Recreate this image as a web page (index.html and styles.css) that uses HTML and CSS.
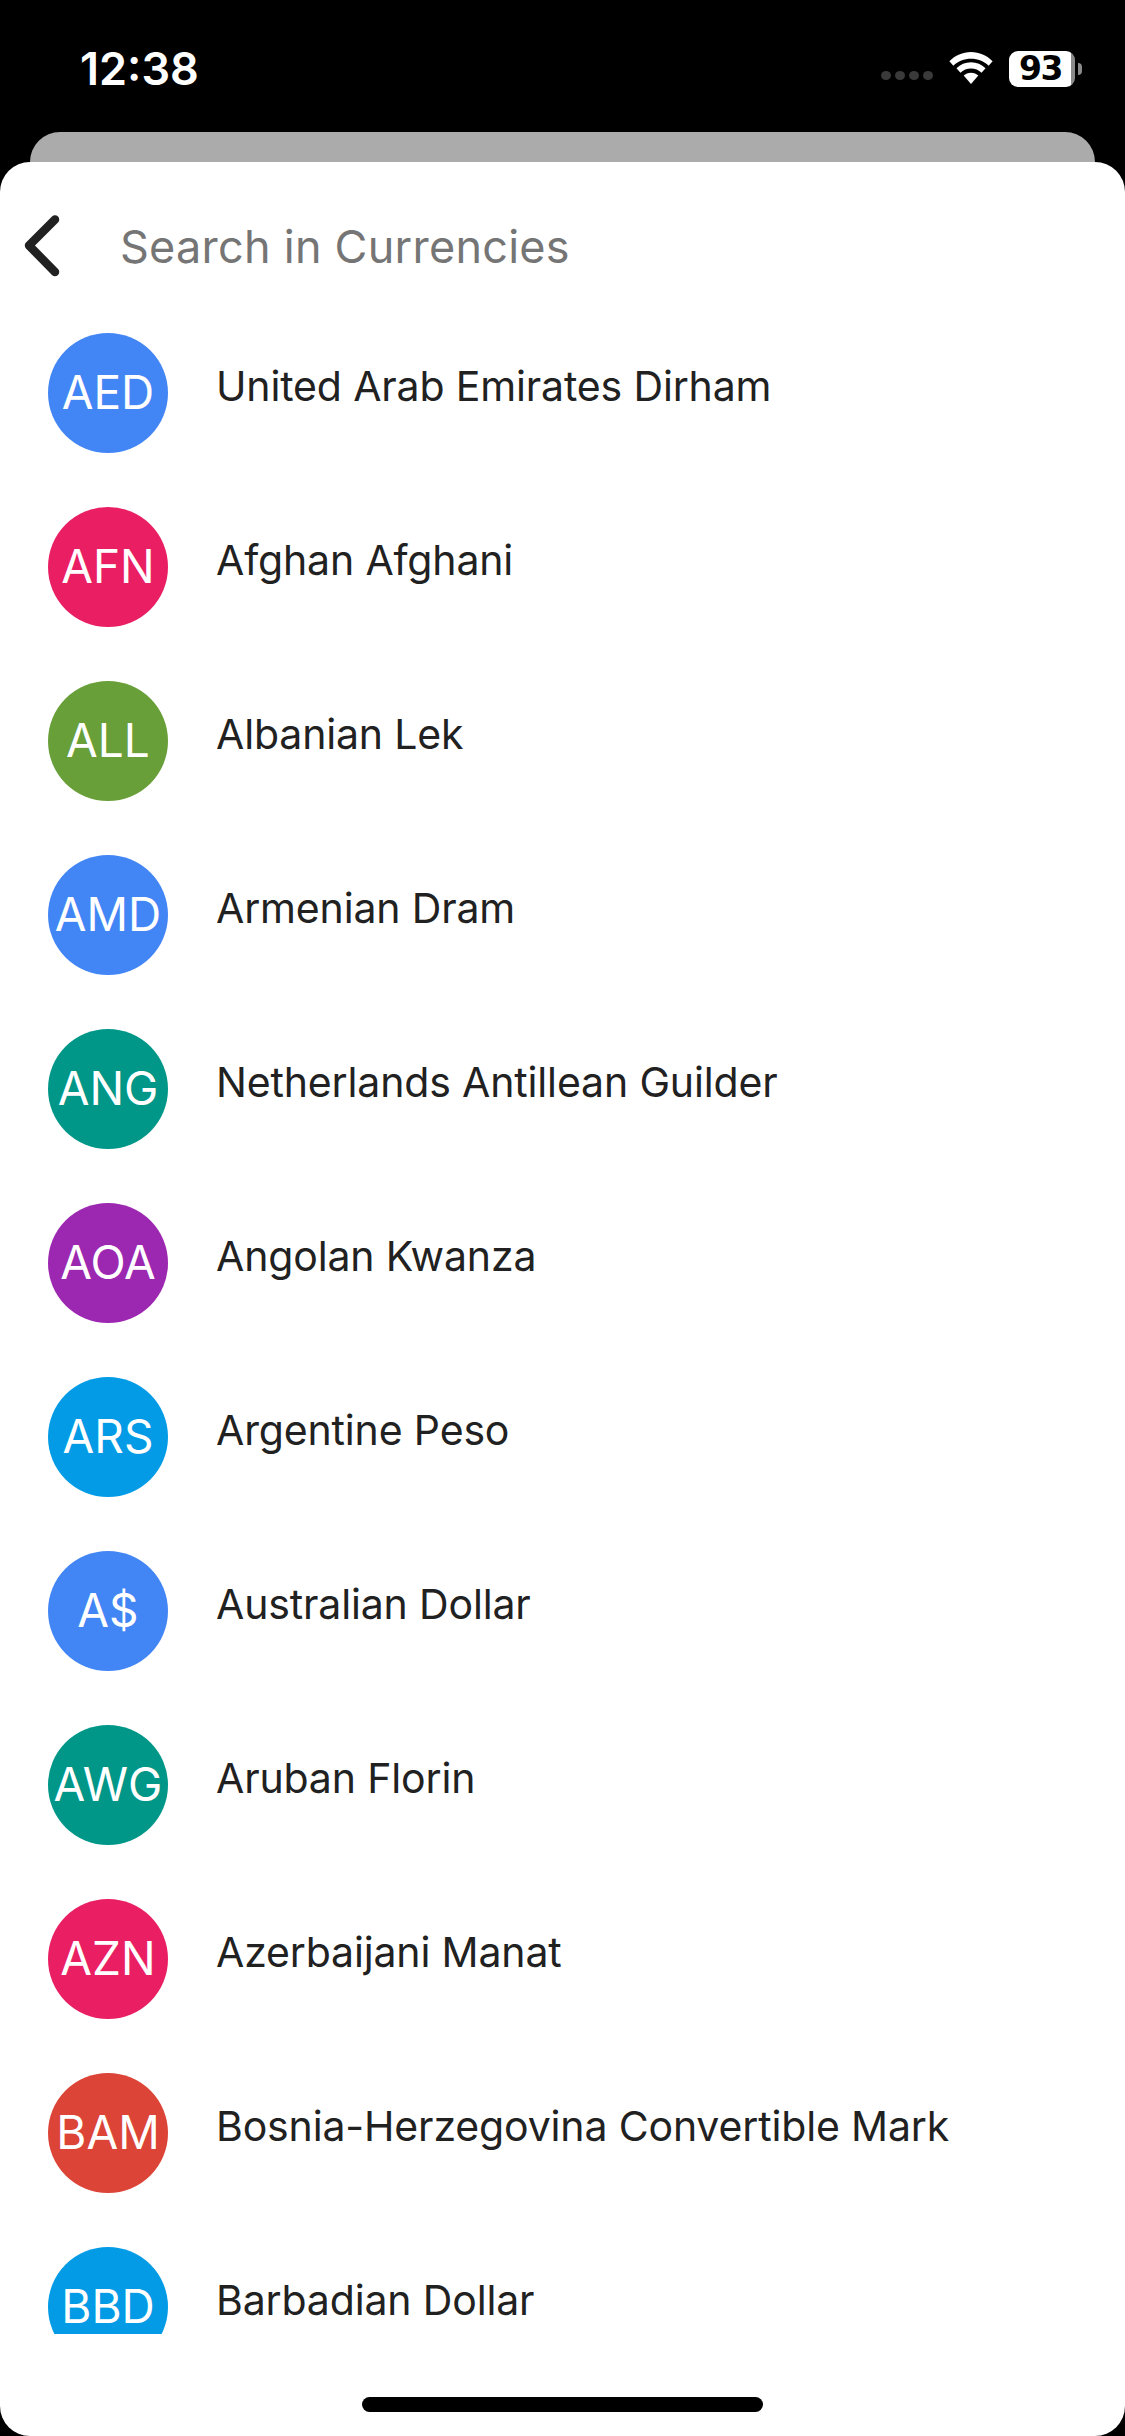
FILE: index.html
```html
<!DOCTYPE html>
<html lang="en">
<head>
<meta charset="utf-8">
<title>Currencies</title>
<link rel="stylesheet" href="styles.css">
</head>
<body>
<div class="phone">
  <header class="status">
    <span class="time">12:38</span>
    <div class="status-icons">
      <div class="signal"><i></i><i></i><i></i><i></i></div>
      <svg class="wifi" width="46" height="34" viewBox="1 0 44 33"><path d="M23 7.500c6.600 0 12.600 2.500 17.100 6.700l3.900-4.300C38.400 4.400 31 1 23 1S7.600 4.400 2 9.900l3.900 4.300C10.400 10 16.400 7.500 23 7.500z" fill="#fff"/><path d="M23 17c3.900 0 7.600 1.500 10.200 4l3.900-4.300C33.400 13.100 28.400 11 23 11s-10.400 2.100-14.100 5.700l3.900 4.300c2.600-2.500 6.300-4 10.200-4z" fill="#fff"/><path d="M23 21c-2.800 0-5.300 1.100-7.100 2.800L23 32l7.100-8.200C28.300 22.100 25.800 21 23 21z" fill="#fff"/></svg>
      <div class="battery"><div class="battery-body"><span>93</span></div><div class="battery-cap"></div></div>
    </div>
  </header>
  <div class="back-card"></div>
  <main class="sheet">
    <div class="search">
      <svg class="back" width="40" height="64" viewBox="0 0 40 64"><path d="M35 6.500 9 32.500 35 59" fill="none" stroke="#212121" stroke-width="8.500" stroke-linecap="round" stroke-linejoin="round"/></svg>
      <span class="placeholder">Search in Currencies</span>
    </div>
    <ul class="list">
      <li class="row"><span class="avatar c-blue">AED</span><span class="name">United Arab Emirates Dirham</span></li>
      <li class="row"><span class="avatar c-pink">AFN</span><span class="name">Afghan Afghani</span></li>
      <li class="row"><span class="avatar c-green">ALL</span><span class="name">Albanian Lek</span></li>
      <li class="row"><span class="avatar c-blue">AMD</span><span class="name">Armenian Dram</span></li>
      <li class="row"><span class="avatar c-teal">ANG</span><span class="name">Netherlands Antillean Guilder</span></li>
      <li class="row"><span class="avatar c-purple">AOA</span><span class="name">Angolan Kwanza</span></li>
      <li class="row"><span class="avatar c-sky">ARS</span><span class="name">Argentine Peso</span></li>
      <li class="row"><span class="avatar c-blue">A$</span><span class="name">Australian Dollar</span></li>
      <li class="row"><span class="avatar c-teal">AWG</span><span class="name">Aruban Florin</span></li>
      <li class="row"><span class="avatar c-pink">AZN</span><span class="name">Azerbaijani Manat</span></li>
      <li class="row"><span class="avatar c-red">BAM</span><span class="name">Bosnia-Herzegovina Convertible Mark</span></li>
      <li class="row"><span class="avatar c-sky">BBD</span><span class="name">Barbadian Dollar</span></li>
    </ul>
    <div class="home-zone"><div class="home-bar"></div></div>
  </main>
</div>
</body>
</html>
```

FILE: styles.css
```css
* { box-sizing: border-box; }
html, body { margin: 0; padding: 0; background: #000; }
.phone {
  width: 1125px;
  height: 2436px;
  display: flex;
  flex-direction: column;
  background: #000;
  font-family: Inter, "Liberation Sans", sans-serif;
  overflow: hidden;
}
.status {
  height: 132px;
  flex: none;
  display: flex;
  justify-content: space-between;
  align-items: flex-start;
  padding: 39px 43px 0 80px;
  color: #fff;
}
.time { font-size: 45px; font-weight: 600; line-height: 60px; }
.status-icons { display: flex; align-items: center; gap: 15px; padding-top: 12px; }
.signal { display: flex; gap: 4px; margin-top: 12px; }
.signal i { width: 10px; height: 9px; border-radius: 50%; background: #3a3a3a; }
.wifi { margin-top: -3px; }
.battery { display: flex; align-items: center; gap: 3px; }
.battery-body {
  width: 66px;
  height: 36px;
  border-radius: 9px;
  background: linear-gradient(to right, #fff 94%, #8a8a8a 94%);
  display: flex;
  align-items: center;
  justify-content: center;
  padding-right: 3px;
}
.battery-body span {
  color: #000;
  font-family: "DejaVu Sans", sans-serif;
  font-size: 33px;
  font-weight: 700;
  line-height: 36px;
  letter-spacing: -1.500px;
}
.battery-cap { width: 4px; height: 12px; background: #8a8a8a; border-radius: 0 4px 4px 0; }
.back-card {
  flex: none;
  height: 30px;
  margin: 0 30px;
  background: #ababab;
  border-radius: 30px 30px 0 0;
}
.sheet {
  flex: 1;
  min-height: 0;
  display: flex;
  flex-direction: column;
  background: #fff;
  border-radius: 30px;
}
.search {
  flex: none;
  height: 144px;
  display: flex;
  align-items: flex-start;
  padding: 50px 0 0 20px;
}
.back { flex: none; margin-top: 1px; }
.placeholder {
  margin-left: 60px;
  font-size: 45px;
  line-height: 64px;
  letter-spacing: 0.250px;
  padding-top: 3px;
  color: #757575;
}
.list {
  list-style: none;
  margin: 0;
  padding: 0;
  flex: none;
  height: 2028px;
  overflow: hidden;
}
.row {
  height: 174px;
  display: flex;
  align-items: center;
  padding: 0 0 0 48px;
}
.avatar {
  flex: none;
  width: 120px;
  height: 120px;
  border-radius: 50%;
  display: flex;
  align-items: center;
  justify-content: center;
  color: #fff;
  font-size: 46px;
  line-height: 1;
  padding-bottom: 2px;
}
.name {
  margin: -15px 0 0 48px;
  font-size: 41px;
  line-height: 56px;
  letter-spacing: -0.150px;
  color: #212121;
  white-space: nowrap;
}
.c-blue { background: #4285f4; }
.c-pink { background: #e91e63; }
.c-green { background: #689f38; }
.c-teal { background: #009688; }
.c-purple { background: #9c27b0; }
.c-sky { background: #039be5; }
.c-red { background: #db4437; }
.home-zone { flex: 1; position: relative; }
.home-bar {
  position: absolute;
  left: 362px;
  top: 63px;
  width: 401px;
  height: 15px;
  border-radius: 8px;
  background: #000;
}
```
